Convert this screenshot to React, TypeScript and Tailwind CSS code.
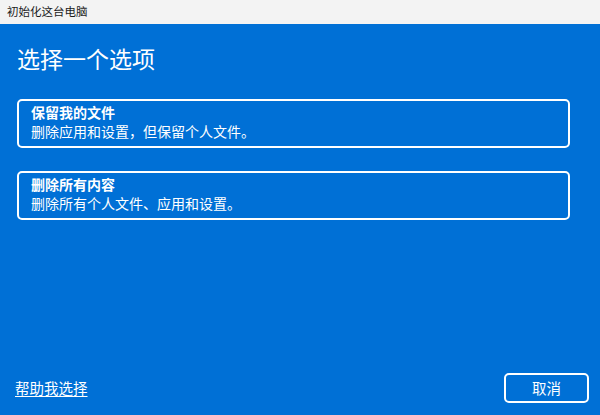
const options = [
  { title: "保留我的文件", desc: "删除应用和设置，但保留个人文件。" },
  { title: "删除所有内容", desc: "删除所有个人文件、应用和设置。" },
];

export default function App() {
  return (
    <div
      className="w-[600px] h-[415px] flex flex-col overflow-hidden"
      style={{ fontFamily: '"Noto Sans CJK SC", "Noto Sans", sans-serif' }}
    >
      <div className="h-[24px] shrink-0 bg-[#f3f3f3] pl-[7px] flex items-center text-[11.5px] text-[#1b1b1b]">
        初始化这台电脑
      </div>

      <div className="flex-1 bg-[#0070d6] text-white flex flex-col pl-[17px] pr-[11px]">
        <h1 className="mt-[17px] text-[23px] leading-[34px] font-normal">选择一个选项</h1>

        <div className="mt-[24px] mr-[19px] flex flex-col gap-[23px]">
          {options.map((o) => (
            <button
              key={o.title}
              className="text-left border-2 border-white rounded-[5px] pl-[12px] pt-[2px] pb-[5px] text-[14px] leading-[19px]"
            >
              <div className="font-bold">{o.title}</div>
              <div>{o.desc}</div>
            </button>
          ))}
        </div>

        <div className="mt-auto mb-[12px] flex items-center justify-between">
          <a href="#" className="-ml-[2px] text-[14.5px] underline underline-offset-2">
            帮助我选择
          </a>
          <button className="h-[30px] w-[85px] border-2 border-white rounded-[5px] text-[14.5px] flex items-center justify-center">
            取消
          </button>
        </div>
      </div>
    </div>
  );
}
